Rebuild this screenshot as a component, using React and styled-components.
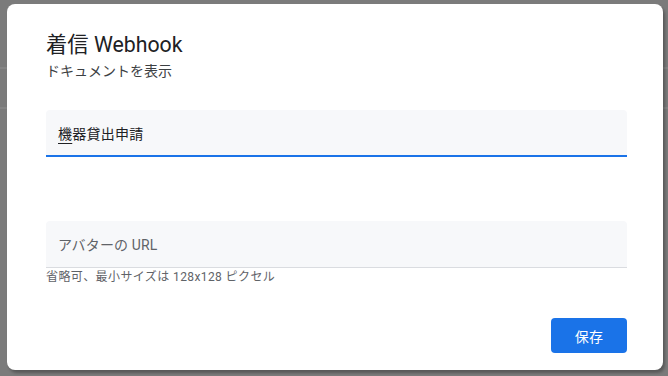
import React from 'react'
import styled, { createGlobalStyle } from 'styled-components'

const GlobalStyle = createGlobalStyle`
  html, body {
    margin: 0;
    padding: 0;
    width: 668px;
    height: 376px;
    overflow: hidden;
    font-family: Roboto, "Noto Sans CJK JP", sans-serif;
  }
`

export default function App() {
  return (
    <Backdrop>
      <GlobalStyle />
      <Dialog>
        <Header>
          <Title>着信 Webhook</Title>
          <Subtitle>ドキュメントを表示</Subtitle>
        </Header>

        <Field $active>
          <Value>
            <Composing>機</Composing>器貸出申請
          </Value>
        </Field>

        <Field $second>
          <Placeholder>アバターの URL</Placeholder>
        </Field>
        <Helper>省略可、最小サイズは 128x128 ピクセル</Helper>

        <Actions>
          <SaveButton>保存</SaveButton>
        </Actions>
      </Dialog>
    </Backdrop>
  )
}

//####################### Style #################

const Backdrop = styled.div`
  box-sizing: border-box;
  width: 668px;
  height: 376px;
  padding: 4px 5px 6px 7px;
  background-color: #7b7b7b;
  background-image:
    linear-gradient(to bottom, transparent 67px, #858585 67px, #858585 69px, transparent 69px),
    linear-gradient(to bottom, transparent 107px, #858585 107px, #858585 109px, transparent 109px);
`

const Dialog = styled.div`
  box-sizing: border-box;
  width: 656px;
  height: 366px;
  background: #fff;
  border-radius: 8px;
  box-shadow: 2px 3px 3px rgba(0, 0, 0, 0.28);
  padding: 27px 36px 17px 39px;
  display: flex;
  flex-direction: column;
`

const Header = styled.div`
  display: flex;
  flex-direction: column;
`

const Title = styled.h1`
  margin: 0;
  font-size: 21.3px;
  line-height: 28px;
  font-weight: 400;
  color: #202124;
`

const Subtitle = styled.div`
  margin-top: 2px;
  font-size: 14px;
  line-height: 20px;
  color: #3c4043;
`

const Field = styled.div`
  box-sizing: border-box;
  height: 47px;
  margin-top: ${({ $second }) => ($second ? '64px' : '29px')};
  padding: 0 12px;
  display: flex;
  align-items: center;
  background: #f7f8fa;
  border-radius: 4px 4px 0 0;
  border-bottom: ${({ $active }) => ($active ? '2px solid #1a73e8' : '1px solid #dadce0')};
`

const Value = styled.span`
  font-size: 14px;
  letter-spacing: 0.25px;
  color: #202124;
`

const Composing = styled.span`
  text-decoration: underline;
  text-underline-offset: 4px;
  text-decoration-thickness: 1px;
`

const Placeholder = styled.span`
  font-size: 14px;
  letter-spacing: 0.15px;
  color: #5f6368;
`

const Helper = styled.div`
  margin-top: 1px;
  font-size: 12px;
  line-height: 16px;
  letter-spacing: 0.4px;
  color: #5f6368;
`

const Actions = styled.div`
  margin-top: auto;
  display: flex;
  justify-content: flex-end;
`

const SaveButton = styled.button`
  box-sizing: border-box;
  width: 76px;
  height: 35px;
  border: none;
  border-radius: 4px;
  background: #1a73e8;
  color: #fff;
  font-family: Roboto, "Noto Sans CJK JP", sans-serif;
  font-size: 14px;
  letter-spacing: 0.25px;
  cursor: pointer;
`
